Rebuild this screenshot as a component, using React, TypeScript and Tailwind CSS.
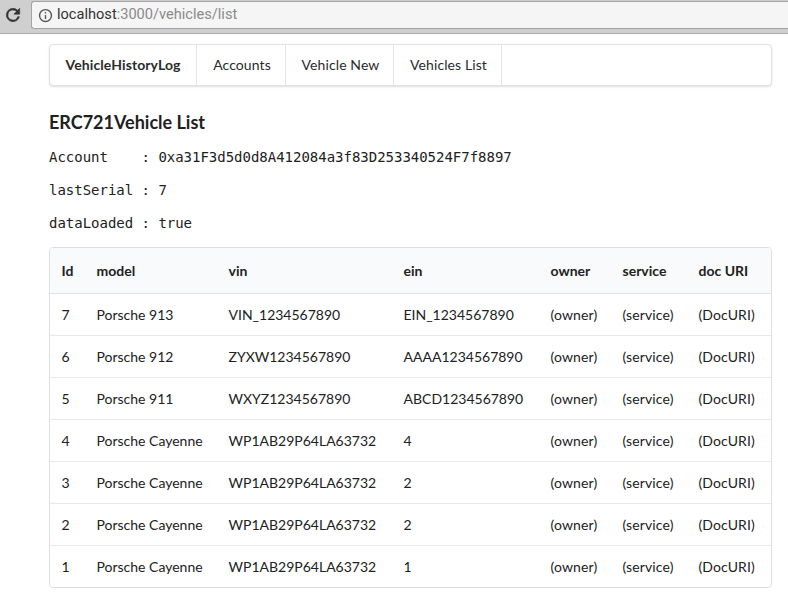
const rows = [
  ["7", "Porsche 913", "VIN_1234567890", "EIN_1234567890"],
  ["6", "Porsche 912", "ZYXW1234567890", "AAAA1234567890"],
  ["5", "Porsche 911", "WXYZ1234567890", "ABCD1234567890"],
  ["4", "Porsche Cayenne", "WP1AB29P64LA63732", "4"],
  ["3", "Porsche Cayenne", "WP1AB29P64LA63732", "2"],
  ["2", "Porsche Cayenne", "WP1AB29P64LA63732", "2"],
  ["1", "Porsche Cayenne", "WP1AB29P64LA63732", "1"],
];
const heads = ["Id", "model", "vin", "ein", "owner", "service", "doc URI"];

export default function App() {
  return (
    <div className="w-[788px] h-[604px] overflow-hidden bg-white font-['Lato','Liberation_Sans',sans-serif] text-[14px] text-[#212121]">
      <div className="h-[34px] flex bg-[#cfcfcf] border-b border-[#a9a9a9]">
        <div className="w-[31px] flex justify-center pt-[5px] pr-[6px]">
          <svg width="20" height="20" viewBox="0 0 24 24" fill="#333" stroke="#333" strokeWidth="0.7">
            <path d="M17.65 6.35A7.96 7.96 0 0 0 12 4a8 8 0 1 0 7.73 10h-2.08A6 6 0 1 1 12 6c1.66 0 3.14.69 4.22 1.78L13 11h7V4l-2.35 2.35z" />
          </svg>
        </div>
        <div className="flex-1 h-[28px] mt-px bg-[#f5f5f5] border border-r-0 border-[#a3a3a3] rounded-l-[3px] flex items-center pl-[6px] gap-[4px] text-[14.6px] text-[#8a8a8a]">
          <svg width="15" height="15" viewBox="0 0 24 24" fill="none" stroke="#555" strokeWidth="2.2">
            <circle cx="12" cy="12" r="9.5" />
            <path d="M12 11v6.5M12 6.5v2.4" />
          </svg>
          <span className="font-['Roboto','Noto_Sans',sans-serif]">
            <span className="text-[#333]">localhost</span>:3000/vehicles/list
          </span>
        </div>
      </div>

      <div className="pl-[49px] w-[772px]">
        <nav className="mt-[10px] h-[42px] flex bg-white border border-[#e2e2e3] rounded-[4px] shadow-[0_1px_2px_0_rgba(34,36,38,0.15)] text-[#2b2b2b]">
          <a className="w-[147px] pb-px flex items-center justify-center font-bold tracking-[0.1px] border-r border-[#e6e6e7]">VehicleHistoryLog</a>
          <a className="w-[89px] pb-px pl-[2px] flex items-center justify-center tracking-[0.1px] border-r border-[#e6e6e7]">Accounts</a>
          <a className="w-[108px] pb-px pl-[2px] flex items-center justify-center tracking-[0.1px] border-r border-[#e6e6e7]">Vehicle New</a>
          <a className="w-[108px] pb-px pl-[2px] flex items-center justify-center tracking-[0.1px] border-r border-[#e6e6e7]">Vehicles List</a>
        </nav>

        <h1 className="mt-[25px] text-[18px] leading-[23px] font-bold">ERC721Vehicle List</h1>

        <pre className="mt-[14px] text-[14px] leading-[19px] tracking-[-0.015px] font-['DejaVu_Sans_Mono',monospace] text-[#212121]">Account    : 0xa31F3d5d0d8A412084a3f83D253340524F7f8897</pre>
        <pre className="mt-[14px] text-[14px] leading-[19px] tracking-[-0.015px] font-['DejaVu_Sans_Mono',monospace] text-[#212121]">lastSerial : 7</pre>
        <pre className="mt-[14px] text-[14px] leading-[19px] tracking-[-0.015px] font-['DejaVu_Sans_Mono',monospace] text-[#212121]">dataLoaded : true</pre>

        <div className="mt-[14px] border border-[#dedfdf] rounded-[4px] overflow-hidden">
          <table className="w-full table-fixed border-collapse">
            <colgroup>
              <col className="w-[35px]" />
              <col className="w-[132px]" />
              <col className="w-[175px]" />
              <col className="w-[147px]" />
              <col className="w-[72px]" />
              <col className="w-[76px]" />
              <col />
            </colgroup>
            <thead>
              <tr className="h-[45px] bg-[#f9fafb] border-b border-[#e2e2e3]">
                {heads.map((h) => (
                  <th key={h} className="pl-[11.5px] text-left font-bold whitespace-nowrap">{h}</th>
                ))}
              </tr>
            </thead>
            <tbody>
              {rows.map((r, i) => (
                <tr key={r[0]} className={i < rows.length - 1 ? "h-[42px] border-b border-[#e9e9ea]" : "h-[42px]"}>
                  {r.map((c, j) => (
                    <td key={j} className="pl-[11.5px] whitespace-nowrap">{c}</td>
                  ))}
                  <td className="pl-[11.5px] whitespace-nowrap tracking-[0.12px]">(owner)</td>
                  <td className="pl-[11.5px] whitespace-nowrap tracking-[0.12px]">(service)</td>
                  <td className="pl-[11.5px] whitespace-nowrap tracking-[0.12px]">(DocURI)</td>
                </tr>
              ))}
            </tbody>
          </table>
        </div>
      </div>
    </div>
  );
}
